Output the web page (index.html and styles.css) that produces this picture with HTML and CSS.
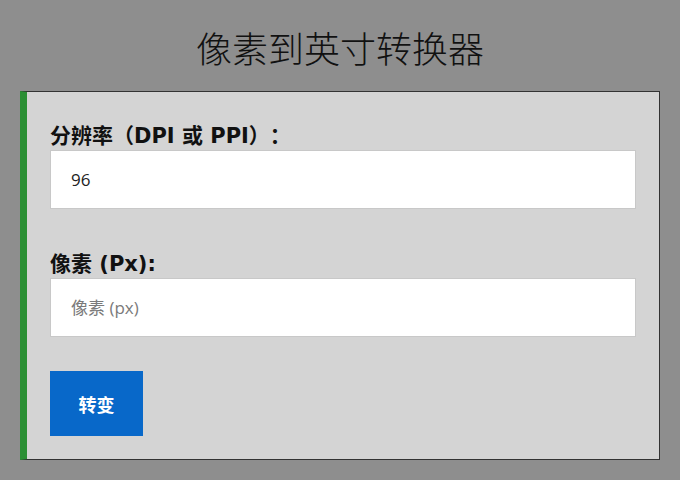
FILE: index.html
```html
<!DOCTYPE html>
<html lang="zh">
<head>
<meta charset="utf-8">
<title>像素到英寸转换器</title>
<link rel="stylesheet" href="styles.css">
</head>
<body>
<h1 class="title">像素到英寸转换器</h1>
<div class="card">
  <div class="group">
    <label class="label" for="dpi">分辨率（DPI 或 PPI）：</label>
    <input class="field" id="dpi" type="text" value="96">
  </div>
  <div class="group group-px">
    <label class="label" for="px">像素 (Px):</label>
    <input class="field" id="px" type="text" placeholder="像素 (px)">
  </div>
  <button class="btn" type="button">转变</button>
</div>
</body>
</html>
```

FILE: styles.css
```css
html, body {
  margin: 0;
  background: #8e8e8e;
}
body {
  padding: 23px 20px 0;
  font-family: "Open Sans", "Noto Sans CJK SC", sans-serif;
  text-spacing-trim: space-all;
}
.title {
  margin: 0;
  text-align: center;
  font-family: "Noto Sans CJK SC", sans-serif;
  font-weight: 300;
  font-size: 36px;
  line-height: 48px;
  color: #111;
}
.card {
  margin-top: 20px;
  background: #d4d4d4;
  border: 1px solid #333;
  border-left: 7px solid #2b8f34;
  padding: 30px 23px 23px 23px;
}
.group {
  display: flex;
  flex-direction: column;
}
.group-px {
  margin-top: 41px;
}
.label {
  font-family: "DejaVu Sans", "Noto Sans CJK SC", sans-serif;
  font-weight: 700;
  font-size: 21px;
  line-height: 28px;
  color: #111;
  text-spacing-trim: space-all;
}
.field {
  box-sizing: border-box;
  height: 59px;
  margin: 0;
  border: 1px solid #c8c8c8;
  background: #fff;
  padding: 0 20px;
  font-family: "Open Sans", "Noto Sans CJK SC", sans-serif;
  font-size: 17px;
  color: #222;
  outline: none;
}
.field::placeholder {
  color: #7a7a7a;
}
.btn {
  margin-top: 34px;
  width: 93px;
  height: 65px;
  border: none;
  background: #0868c9;
  color: #fff;
  font-family: "Noto Sans CJK SC", sans-serif;
  font-weight: 700;
  font-size: 18px;
  padding: 0;
  display: block;
}
```
